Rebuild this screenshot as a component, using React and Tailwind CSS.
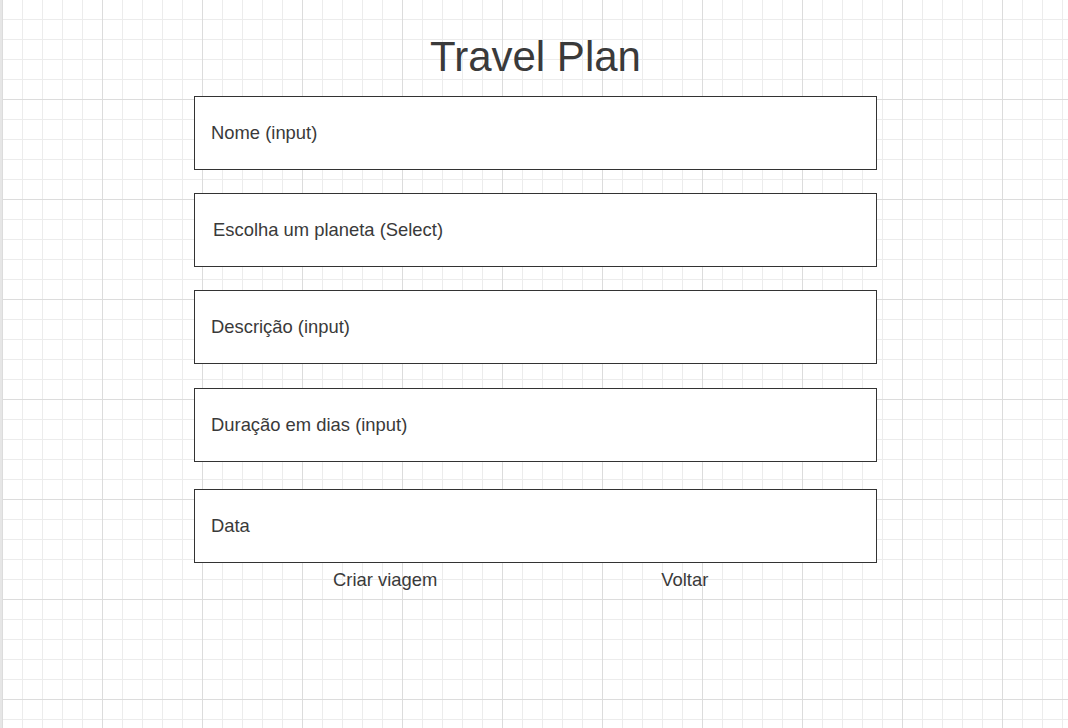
const fields = [
  { label: "Nome (input)", mt: "mt-[15px]", pad: "pl-[16px]" },
  { label: "Escolha um planeta (Select)", mt: "mt-[23px]", pad: "pl-[18px]" },
  { label: "Descrição (input)", mt: "mt-[23px]", pad: "pl-[16px]" },
  { label: "Duração em dias (input)", mt: "mt-[24px]", pad: "pl-[16px]" },
  { label: "Data", mt: "mt-[27px]", pad: "pl-[16px]" },
];

function Field({ label, mt, pad }) {
  return (
    <div
      className={`${mt} ${pad} h-[74px] flex items-center bg-white border border-[#333333] text-[18.4px] text-[#3a3a3a]`}
    >
      {label}
    </div>
  );
}

export default function App() {
  return (
    <div
      className="h-[728px] w-full overflow-hidden bg-white bg-[linear-gradient(to_right,#dcdcdc_1px,transparent_1px),linear-gradient(to_bottom,#dcdcdc_1px,transparent_1px),linear-gradient(to_right,#ececec_1px,transparent_1px),linear-gradient(to_bottom,#ececec_1px,transparent_1px)] bg-size-[100px_100px,100px_100px,20px_20px,20px_20px] bg-position-[0px_-1px] border-l-2 border-[#e6e6e6]"
      style={{ fontFamily: '"Liberation Sans", Arial, sans-serif' }}
    >
      <div className="ml-[192px] w-[683px] pt-[33px]">
        <h1 className="h-[48px] leading-[48px] text-center text-[42px] text-[#3a3a3a]">
          Travel Plan
        </h1>
        {fields.map((f) => (
          <Field key={f.label} {...f} />
        ))}
        <div className="mt-[6px] flex pl-[139px] text-[18.4px] leading-[22px] text-[#3a3a3a]">
          <span>Criar viagem</span>
          <span className="ml-[224px]">Voltar</span>
        </div>
      </div>
    </div>
  );
}
